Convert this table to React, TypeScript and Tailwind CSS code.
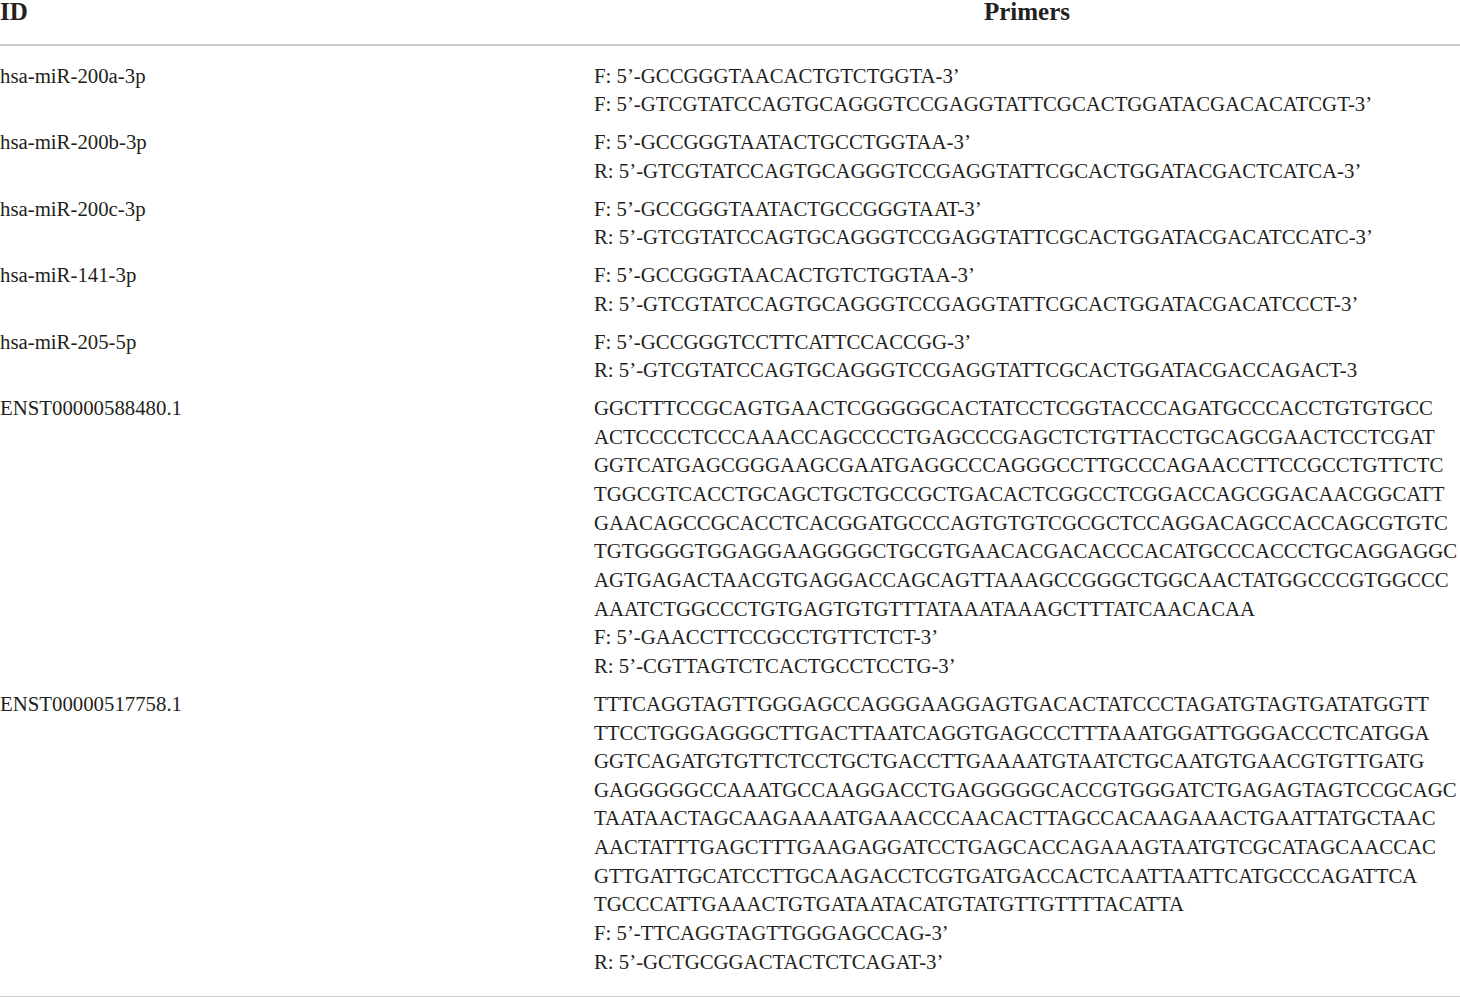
const rows: { id: string; lines: string[] }[] = [
  {
    id: "hsa-miR-200a-3p",
    lines: [
      "F: 5’-GCCGGGTAACACTGTCTGGTA-3’",
      "F: 5’-GTCGTATCCAGTGCAGGGTCCGAGGTATTCGCACTGGATACGACACATCGT-3’",
    ],
  },
  {
    id: "hsa-miR-200b-3p",
    lines: [
      "F: 5’-GCCGGGTAATACTGCCTGGTAA-3’",
      "R: 5’-GTCGTATCCAGTGCAGGGTCCGAGGTATTCGCACTGGATACGACTCATCA-3’",
    ],
  },
  {
    id: "hsa-miR-200c-3p",
    lines: [
      "F: 5’-GCCGGGTAATACTGCCGGGTAAT-3’",
      "R: 5’-GTCGTATCCAGTGCAGGGTCCGAGGTATTCGCACTGGATACGACATCCATC-3’",
    ],
  },
  {
    id: "hsa-miR-141-3p",
    lines: [
      "F: 5’-GCCGGGTAACACTGTCTGGTAA-3’",
      "R: 5’-GTCGTATCCAGTGCAGGGTCCGAGGTATTCGCACTGGATACGACATCCCT-3’",
    ],
  },
  {
    id: "hsa-miR-205-5p",
    lines: [
      "F: 5’-GCCGGGTCCTTCATTCCACCGG-3’",
      "R: 5’-GTCGTATCCAGTGCAGGGTCCGAGGTATTCGCACTGGATACGACCAGACT-3",
    ],
  },
  {
    id: "ENST00000588480.1",
    lines: [
      "GGCTTTCCGCAGTGAACTCGGGGGCACTATCCTCGGTACCCAGATGCCCACCTGTGTGCC",
      "ACTCCCCTCCCAAACCAGCCCCTGAGCCCGAGCTCTGTTACCTGCAGCGAACTCCTCGAT",
      "GGTCATGAGCGGGAAGCGAATGAGGCCCAGGGCCTTGCCCAGAACCTTCCGCCTGTTCTC",
      "TGGCGTCACCTGCAGCTGCTGCCGCTGACACTCGGCCTCGGACCAGCGGACAACGGCATT",
      "GAACAGCCGCACCTCACGGATGCCCAGTGTGTCGCGCTCCAGGACAGCCACCAGCGTGTC",
      "TGTGGGGTGGAGGAAGGGGCTGCGTGAACACGACACCCACATGCCCACCCTGCAGGAGGC",
      "AGTGAGACTAACGTGAGGACCAGCAGTTAAAGCCGGGCTGGCAACTATGGCCCGTGGCCC",
      "AAATCTGGCCCTGTGAGTGTGTTTATAAATAAAGCTTTATCAACACAA",
      "F: 5’-GAACCTTCCGCCTGTTCTCT-3’",
      "R: 5’-CGTTAGTCTCACTGCCTCCTG-3’",
    ],
  },
  {
    id: "ENST00000517758.1",
    lines: [
      "TTTCAGGTAGTTGGGAGCCAGGGAAGGAGTGACACTATCCCTAGATGTAGTGATATGGTT",
      "TTCCTGGGAGGGCTTGACTTAATCAGGTGAGCCCTTTAAATGGATTGGGACCCTCATGGA",
      "GGTCAGATGTGTTCTCCTGCTGACCTTGAAAATGTAATCTGCAATGTGAACGTGTTGATG",
      "GAGGGGGCCAAATGCCAAGGACCTGAGGGGGCACCGTGGGATCTGAGAGTAGTCCGCAGC",
      "TAATAACTAGCAAGAAAATGAAACCCAACACTTAGCCACAAGAAACTGAATTATGCTAAC",
      "AACTATTTGAGCTTTGAAGAGGATCCTGAGCACCAGAAAGTAATGTCGCATAGCAACCAC",
      "GTTGATTGCATCCTTGCAAGACCTCGTGATGACCACTCAATTAATTCATGCCCAGATTCA",
      "TGCCCATTGAAACTGTGATAATACATGTATGTTGTTTTACATTA",
      "F: 5’-TTCAGGTAGTTGGGAGCCAG-3’",
      "R: 5’-GCTGCGGACTACTCTCAGAT-3’",
    ],
  },
];

export default function App() {
  return (
    <div className="h-[997px] w-[1460px] overflow-hidden bg-white font-['Liberation_Serif',serif] text-[#231f20]">
      <div className="grid grid-cols-[594px_1fr] border-b-2 border-[#cccccc] pb-[20px] text-[25px] font-bold leading-[24px]">
        <div>ID</div>
        <div className="text-center">Primers</div>
      </div>
      <div className="border-b-2 border-[#cccccc] pt-[11px] pb-[15px] text-[20.8px] leading-[28.65px]">
        {rows.map((row) => (
          <div key={row.id} className="grid grid-cols-[594px_1fr] py-[4.6px]">
            <div>{row.id}</div>
            <div>
              {row.lines.map((line, i) => (
                <div key={i} className="whitespace-nowrap">
                  {line}
                </div>
              ))}
            </div>
          </div>
        ))}
      </div>
    </div>
  );
}
